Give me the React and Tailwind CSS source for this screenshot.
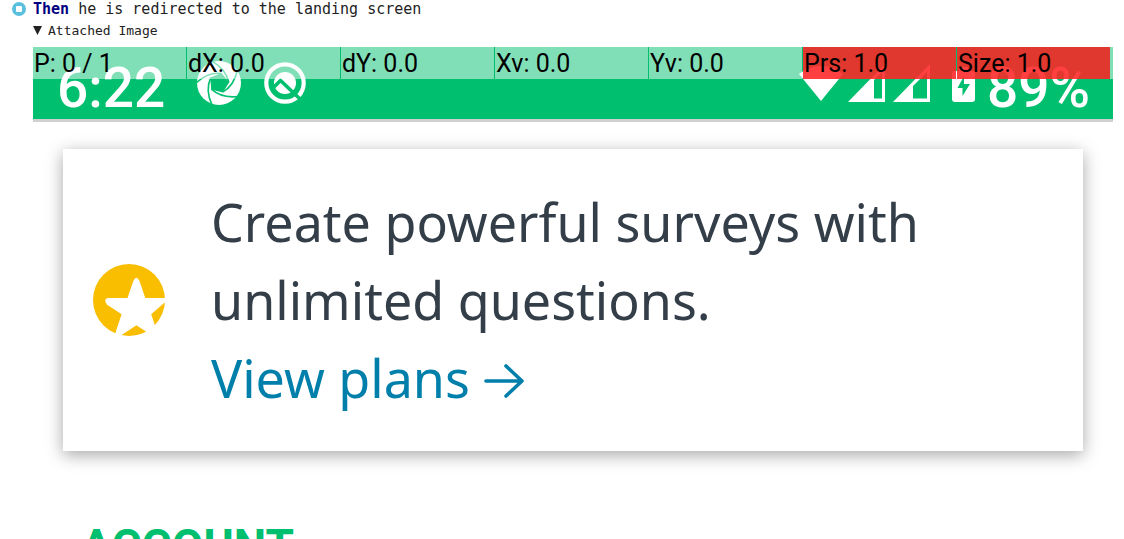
const metrics = [
  { label: "P: 0 / 1" },
  { label: "dX: 0.0" },
  { label: "dY: 0.0" },
  { label: "Xv: 0.0" },
  { label: "Yv: 0.0" },
  { label: "Prs: 1.0", alert: true },
  { label: "Size: 1.0", alert: true },
];

function StepIcon() {
  return (
    <svg className="size-4 shrink-0" viewBox="0 0 16 16" aria-hidden="true">
      <circle cx="8" cy="8" r="7" fill="#5bc0de" />
      <rect x="5" y="5" width="6" height="6" rx="1" fill="#fff" />
    </svg>
  );
}

function ApertureIcon() {
  return (
    <svg className="size-12" viewBox="0 0 48 48" aria-hidden="true">
      <circle cx="24" cy="24" r="22" fill="#fff" />
      <path d="M26.500 14L34.200 23.300L27.800 33.500L16.200 30.600L15.300 18.600Z" fill="#00bf6f" />
      <g fill="none" stroke="#00bf6f" strokeWidth="1.600">
        {[0, 72, 144, 216, 288].map((a) => (
          <path key={a} d="M1 24Q13 13 26.500 14.500" transform={`rotate(${a} 24 24)`} />
        ))}
      </g>
    </svg>
  );
}

function QIcon() {
  return (
    <svg className="size-12" viewBox="0 0 48 48" aria-hidden="true">
      <circle cx="24" cy="24" r="18.700" fill="none" stroke="#fff" strokeWidth="4.200" />
      <circle cx="24" cy="24" r="11" fill="#fff" />
      <path d="M12 29L19.500 21.500L39 40" fill="none" stroke="#00bf6f" strokeWidth="3.600" />
    </svg>
  );
}

function SignalIcon({ low }) {
  return (
    <svg className={`h-11 w-[37px] ${low ? "mr-5" : "mr-2"}`} viewBox="0 0 37 44" aria-hidden="true">
      <path
        d={low ? "M37 5V43H0ZM34 13L20 27V39.500H34Z" : "M37 5V43H0ZM34 13L26 21V39.500H34Z"}
        fill="#fff"
        fillRule="evenodd"
      />
    </svg>
  );
}

function StatusBar() {
  return (
    <div className="relative flex h-[75px] items-start justify-between border-b-3 border-[#d0d0d0] bg-[#00bf6f] pl-6 pr-[23px] pt-3 font-[Roboto,sans-serif] text-[55px] font-medium leading-[58px] text-white">
      <div className="flex items-start gap-[30px]">
        <span>6:22</span>
        <div className="flex gap-[18px]">
          <ApertureIcon />
          <QIcon />
        </div>
      </div>
      <div className="flex items-start">
        <svg className="mr-1 h-11 w-[45px]" viewBox="0 0 45 44" aria-hidden="true">
          <path d="M0 15Q22 -1 44 15L22 42Z" fill="#fff" />
        </svg>
        <SignalIcon />
        <SignalIcon low />
        <svg className="h-11 w-[37px]" viewBox="0 0 37 44" aria-hidden="true">
          <path
            d="M9 8H18V12H23Q25 12 25 14V40Q25 43 22 43H5Q2 43 2 40V14Q2 12 4 12H9ZM14 17L7.500 29H12.500V37L20 25H14Z"
            fill="#fff"
            fillRule="evenodd"
          />
        </svg>
        <span>89%</span>
      </div>
      <div className="absolute inset-x-0 top-0 flex h-8 pr-[2px] text-[25px] font-normal leading-[34px] text-black">
        {metrics.map((m) => (
          <div key={m.label} className={`mr-px flex-1 whitespace-nowrap pl-px ${m.alert ? "bg-[#ff2425]/88" : "bg-white/50"}`}>
            {m.label}
          </div>
        ))}
        <div className="absolute right-0 top-0 h-8 w-[3px] bg-white/50" />
      </div>
    </div>
  );
}

function StarBadge() {
  return (
    <svg className="size-[72px] shrink-0" viewBox="0 0 73 73" aria-hidden="true">
      <circle cx="36.500" cy="36.500" r="36.500" fill="#f9be00" />
      <path
        d="M41 17Q44 11 47 17L53 34.500H78L59 51L68 78L44 62L20 78L29 51L14 41Q10 35 16 34.500H35Z"
        fill="#fff"
      />
    </svg>
  );
}

export default function App() {
  return (
    <main className="h-screen overflow-hidden bg-white font-['DejaVu_Sans_Mono',monospace] text-[#222]">
      <div className="flex items-center gap-1.5 pl-[11px] text-[15px] leading-[18px]">
        <StepIcon />
        <p>
          <b className="text-[#000080]">Then</b> he is redirected to the landing screen
        </p>
      </div>
      <details open className="pl-[33px] pr-[11px]">
        <summary className="flex list-none items-center gap-1.5 pb-1.5 pt-0.5 text-[13px] leading-[21px]">
          <svg className="size-[9px]" viewBox="0 0 9 9" aria-hidden="true">
            <path d="M0 0H9L4.500 9Z" fill="#222" />
          </svg>
          Attached Image
        </summary>
        <StatusBar />
        <section className="mx-[30px] mt-[27px] flex items-center gap-[46px] bg-white px-[30px] py-[34px] font-['Noto_Sans',sans-serif] text-[52px] leading-[78px] text-[#333e48] shadow-[0_4px_16px_rgba(0,0,0,0.35)]">
          <StarBadge />
          <div>
            <p>
              Create powerful surveys with
              <br />
              unlimited questions.
            </p>
            <a href="#plans" className="flex items-center gap-3.5 text-[#007faa]">
              View plans
              <svg className="h-11 w-10" viewBox="0 0 40 44" fill="none" stroke="currentColor" strokeWidth="3.600" strokeLinecap="round" strokeLinejoin="round" aria-hidden="true">
                <path d="M2 25H38M22 10L38 25L22 40" />
              </svg>
            </a>
          </div>
        </section>
        <h2 className="mt-[68px] pl-12 font-[Roboto,sans-serif] text-[46px] font-bold leading-[54px] text-[#00bf6f]">ACCOUNT</h2>
      </details>
    </main>
  );
}
